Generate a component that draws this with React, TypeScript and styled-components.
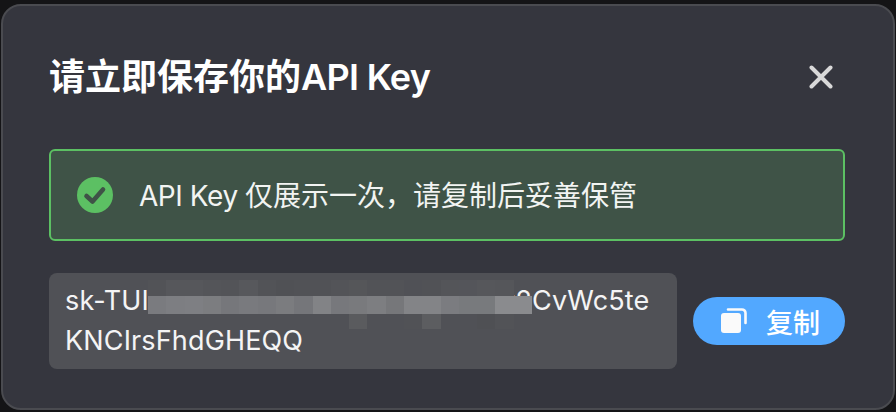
import { createGlobalStyle } from 'styled-components';
import styled from 'styled-components';

const GlobalStyle = createGlobalStyle`
	html,
	body {
		margin: 0;
		height: 100%;
		background: #141416;
	}

	#root {
		height: 100%;
	}
`;

const Page = styled.div`
	box-sizing: border-box;
	width: 896px;
	height: 412px;
	padding: 4px 1px 2px;
	overflow: hidden;
	font-family: Inter, 'Noto Sans CJK SC', sans-serif;
`;

const Modal = styled.div`
	box-sizing: border-box;
	height: 100%;
	padding: 46px 48px 38px 46px;
	display: flex;
	flex-direction: column;
	background: #35363e;
	border: 2px solid #4a4b50;
	border-radius: 20px;
`;

const Header = styled.div`
	height: 50px;
	display: flex;
	justify-content: space-between;
	align-items: center;
	margin-bottom: 47px;
`;

const Title = styled.h2`
	margin: 0;
	font-size: 36px;
	font-weight: 600;
	line-height: 50px;
	color: #ffffff;
	white-space: nowrap;
`;

const Latin = styled.span<{ $spacing: number }>`
	letter-spacing: ${({ $spacing }) => $spacing}px;
`;

const CloseButton = styled.button`
	width: 24px;
	height: 24px;
	margin-right: 12px;
	padding: 0;
	display: flex;
	border: 0;
	background: none;
	color: #d9d9d9;
`;

const Alert = styled.div`
	box-sizing: border-box;
	height: 92px;
	padding: 0 26px;
	display: flex;
	align-items: center;
	gap: 26px;
	background: #3f5347;
	border: 2px solid #5cc063;
	border-radius: 6px;
`;

const AlertText = styled.span`
	padding-top: 2px;
	font-size: 28px;
	line-height: 40px;
	color: #f2f4f2;
	white-space: nowrap;
`;

const KeyRow = styled.div`
	margin-top: 32px;
	display: flex;
	align-items: center;
	gap: 16px;
`;

const KeyBox = styled.div`
	box-sizing: border-box;
	position: relative;
	flex: none;
	width: 628px;
	height: 96px;
	padding: 8px 16px;
	background: #505156;
	border-radius: 8px;
	font-size: 27px;
	letter-spacing: 0.15px;
	line-height: 40px;
	color: #f4f4f5;
	white-space: nowrap;
`;

const Mosaic = styled.div`
	position: absolute;
	left: 99px;
	top: 7px;
	width: 384px;
	display: grid;
	grid-template-columns: repeat(21, 1fr);
	grid-template-rows: 16px 18px 15px;
`;

const MosaicCell = styled.i<{ $tone: string }>`
	background: ${({ $tone }) => $tone};
`;

const CopyButton = styled.button`
	box-sizing: border-box;
	width: 152px;
	height: 48px;
	padding: 0 25px 0 28px;
	display: flex;
	align-items: center;
	justify-content: space-between;
	border: 0;
	border-radius: 24px;
	background: #52a8ff;
	color: #ffffff;
	font-family: inherit;
	font-size: 27px;
	font-weight: 500;
`;

const bg = '#505156';

const mosaicTones = [
	['#525357', '#56575b', '#56575b', '#545559', '#535458', '#57585c', '#525357', '#505155', '#515256', '#515256', '#535458', '#555659', '#525357', '#525357', bg, '#515256', '#545559', '#54555a', '#56575b', '#55565a', 'transparent'],
	['#7a7b7f', '#7d7e82', '#7e7f83', '#7c7d80', '#76777b', '#797a7e', '#77787c', '#7b7c7f', '#75767a', '#828386', '#77787c', '#797a7d', '#7d7e81', '#76777a', '#838487', '#838487', '#7b7c80', '#787a7d', '#787a7d', '#8a8b8e', '#8a8b8e'],
	[bg, bg, bg, bg, bg, bg, bg, bg, bg, bg, bg, '#5a5b5e', bg, bg, '#515256', '#5c5d60', bg, bg, '#4f5054', '#525357', bg],
];

const CheckIcon = () => (
	<svg width="36" height="36" viewBox="0 0 36 36" style={{ flex: 'none' }}>
		<circle cx="18" cy="18" r="18" fill="#5cc063" />
		<path d="M9.5 19l6 5.5L26 12.5" fill="none" stroke="#3f5347" strokeWidth="4.6" strokeLinecap="round" strokeLinejoin="round" />
	</svg>
);

const CloseIcon = () => (
	<svg width="24" height="24" viewBox="0 0 24 24">
		<path d="M2.5 2.5l19 19M21.5 2.5l-19 19" fill="none" stroke="currentColor" strokeWidth="4" strokeLinecap="round" />
	</svg>
);

const CopyIcon = () => (
	<svg width="26" height="26" viewBox="0 0 26 26">
		<rect x="0" y="5" width="20" height="20" rx="3" fill="#fafafa" />
		<path d="M7 1.5h14a3.5 3.5 0 0 1 3.5 3.5V15" fill="none" stroke="#fafafa" strokeWidth="2.6" strokeLinecap="round" />
	</svg>
);

const App = function () {
	return (
		<Page>
			<GlobalStyle />
			<Modal>
				<Header>
					<Title>
						请立即保存你的<Latin $spacing={-0.7}>API Key</Latin>
					</Title>
					<CloseButton aria-label="关闭">
						<CloseIcon />
					</CloseButton>
				</Header>
				<Alert>
					<CheckIcon />
					<AlertText>
						<Latin $spacing={-0.45}>API Key </Latin>仅展示一次，请复制后妥善保管
					</AlertText>
				</Alert>
				<KeyRow>
					<KeyBox>
						sk-TUI<Latin $spacing={-0.08}>xxxxxxxxxxxxxxxxxxxxxxxxx</Latin>2CvWc5te
						<br />
						KNCIrsFhdGHEQQ
						<Mosaic>
							{mosaicTones.flat().map((tone, index) => (
								<MosaicCell key={index} $tone={tone} />
							))}
						</Mosaic>
					</KeyBox>
					<CopyButton>
						<CopyIcon />
						复制
					</CopyButton>
				</KeyRow>
			</Modal>
		</Page>
	);
};

export default App;
